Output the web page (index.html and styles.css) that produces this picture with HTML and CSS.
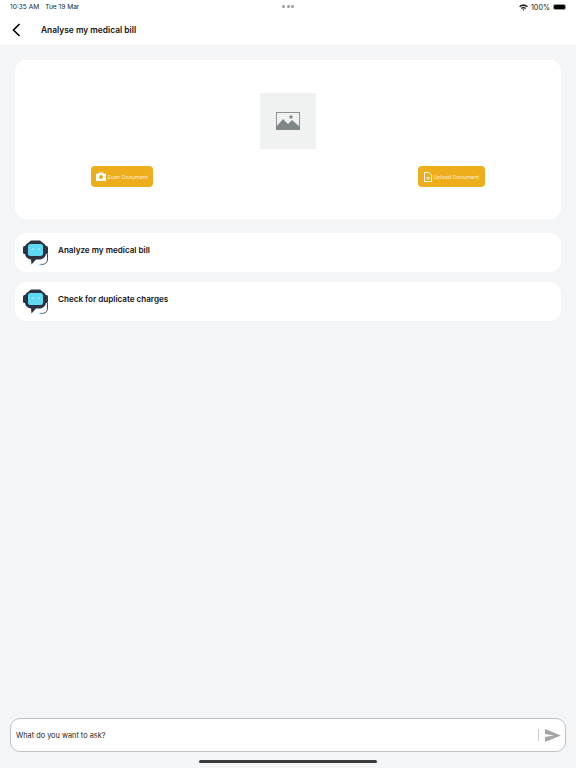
FILE: index.html
```html
<!DOCTYPE html>
<html>
<head>
  <meta charset='UTF-8'>
  <title>Analyse my medical bill</title>
  <link rel="stylesheet" href="styles.css">
</head>
<body>
  <div class='app'>
    <div class='topo'>
      <div class='status'>
        <span class='hora'>10:35 AM</span>
        <span class='data'>Tue 19 Mar</span>
        <span class='pontos'><i></i><i></i><i></i></span>
        <span class='direita'>
          <svg class='wifi' width='9' height='7' viewBox='0 0 10 8'>
            <path d='M0 2.6C2.8 0 7.2 0 10 2.6L8.9 3.8C6.7 1.8 3.3 1.8 1.1 3.8Z' fill='#111'/>
            <path d='M2 4.6C3.7 3 6.3 3 8 4.6L6.9 5.7C5.8 4.7 4.2 4.7 3.1 5.7Z' fill='#111'/>
            <path d='M3.9 6.4C4.5 5.9 5.5 5.9 6.1 6.4L5 7.6Z' fill='#111'/>
          </svg>
          <span>100%</span>
          <span class='bateria'><span class='carga'></span></span>
        </span>
      </div>
      <div class='cabecalho'>
        <svg class='voltar' width='9' height='14' viewBox='0 0 9 14'>
          <path d='M7.5 1L1.5 7L7.5 13' fill='none' stroke='#000' stroke-width='1.6'/>
        </svg>
        <h1>Analyse my medical bill</h1>
      </div>
    </div>

    <div class='conteudo'>
      <div class='cartao'>
        <div class='imagem'>
          <svg width='24' height='18' viewBox='0 0 24 18'>
            <rect x='0.5' y='0.5' width='23' height='17' fill='#f0f1f1' stroke='#8b9294'/>
            <circle cx='15' cy='5' r='1.7' fill='#7f8789'/>
            <path d='M0 17V15L7 7L12 12L16 8L24 15V18H0Z' fill='#7f8789'/>
          </svg>
        </div>
        <div class='botoes'>
          <button class='botao scan'>
            <svg width='10' height='9' viewBox='0 0 10 9'>
              <path d='M3 0.5H7L7.8 1.8H10V9H0V1.8H2.2Z' fill='#fff'/>
              <circle cx='5' cy='5' r='2' fill='#eeae1c'/>
            </svg>
            Scan Document
          </button>
          <button class='botao upload'>
            <svg width='8' height='10' viewBox='0 0 8 10'>
              <path d='M0.5 0.5H5L7.5 3V9.5H0.5Z' fill='none' stroke='#fff'/>
              <path d='M2 6H6M4 4.5V8' stroke='#fff' stroke-width='0.8'/>
            </svg>
            Upload Document
          </button>
        </div>
      </div>

      <div class='opcao'>
        <svg class='robo' width='26' height='26' viewBox='0 0 26 26'>
          <rect x='0' y='6' width='3.5' height='8' rx='1.5' fill='#2b3342'/>
          <rect x='21.5' y='6' width='3.5' height='8' rx='1.5' fill='#2b3342'/>
          <path d='M8 0.5H17L22 4.5C22.8 5.5 23 6.5 23 8V13C23 17 20 19.5 16 19.5H13L8.5 24.5L8 19.5C4.5 19 2 17 2 13V8C2 6.5 2.2 5.5 3 4.5Z' fill='#2b3342'/>
          <rect x='5' y='4' width='15' height='12' rx='2.5' fill='#5fd9f2'/>
          <path d='M8 9.5L11 8V10ZM14 9.5L17 8V10Z' fill='#a8ebfa'/>
          <path d='M24.5 14V19C24.5 23 22 24.5 18 24.5' fill='none' stroke='#2b3342' stroke-width='0.9'/>
          <circle cx='17.5' cy='24.5' r='1.1' fill='#5fd9f2'/>
        </svg>
        <span>Analyze my medical bill</span>
      </div>
      <div class='opcao'>
        <svg class='robo' width='26' height='26' viewBox='0 0 26 26'>
          <rect x='0' y='6' width='3.5' height='8' rx='1.5' fill='#2b3342'/>
          <rect x='21.5' y='6' width='3.5' height='8' rx='1.5' fill='#2b3342'/>
          <path d='M8 0.5H17L22 4.5C22.8 5.5 23 6.5 23 8V13C23 17 20 19.5 16 19.5H13L8.5 24.5L8 19.5C4.5 19 2 17 2 13V8C2 6.5 2.2 5.5 3 4.5Z' fill='#2b3342'/>
          <rect x='5' y='4' width='15' height='12' rx='2.5' fill='#5fd9f2'/>
          <path d='M8 9.5L11 8V10ZM14 9.5L17 8V10Z' fill='#a8ebfa'/>
          <path d='M24.5 14V19C24.5 23 22 24.5 18 24.5' fill='none' stroke='#2b3342' stroke-width='0.9'/>
          <circle cx='17.5' cy='24.5' r='1.1' fill='#5fd9f2'/>
        </svg>
        <span>Check for duplicate charges</span>
      </div>
    </div>

    <div class='rodape'>
      <div class='entrada'>
        <span class='pergunta'>What do you want to ask?</span>
        <span class='barrinha'></span>
        <svg width='16' height='13' viewBox='0 0 15 12'>
          <path d='M0 0L15 6L0 12V7.4L8 6L0 4.6Z' fill='#a3a5a6'/>
        </svg>
      </div>
      <div class='home'></div>
    </div>
  </div>
</body>
</html>
```

FILE: styles.css
```css
html, body { margin: 0; padding: 0; }
body { font-family: "Inter", "Liberation Sans", sans-serif; background: #f3f5f7; color: #111; }
.app { width: 576px; height: 768px; display: flex; flex-direction: column; overflow: hidden; }

.topo { height: 45px; background: #fff; flex: none; }
.status { height: 14px; padding: 0 10px; display: flex; align-items: center; font-size: 6.6px; color: #222; position: relative; }
.data { margin-left: 6px; }
.pontos { position: absolute; left: 282px; top: 5px; display: flex; gap: 1.5px; }
.pontos i { width: 3px; height: 3px; border-radius: 50%; background: #9a9a9a; }
.direita { margin-left: auto; display: flex; align-items: center; gap: 3px; font-size: 7.2px; }
.bateria { width: 13px; height: 6px; border-radius: 2px; border: 1px solid #999; display: block; box-sizing: border-box; }
.carga { display: block; height: 100%; background: #000; border-radius: 1px; }

.cabecalho { height: 31px; display: flex; align-items: center; padding-left: 12px; }
.voltar { flex: none; }
h1 { margin: 0 0 0 20px; font-size: 8.4px; font-weight: 600; color: #111; }

.conteudo { flex: 1; padding: 15px 15px 0; display: flex; flex-direction: column; }
.cartao { height: 159px; background: #fff; border-radius: 11px; padding-top: 33px; box-sizing: border-box; margin-bottom: 14px; }
.imagem { width: 56px; height: 56px; margin: 0 auto 17px; background: #f0f1f1; display: flex; align-items: center; justify-content: center; }
.botoes { display: flex; justify-content: space-between; padding: 0 76px; }
.botao { height: 21px; border: none; border-radius: 4px; background: #eeae1c; color: rgba(255, 255, 255, 0.8); font-family: inherit; font-size: 5.4px; padding: 0; display: flex; align-items: center; justify-content: center; gap: 1px; }
.scan { width: 62px; }
.upload { width: 67px; }

.opcao { height: 39px; background: #fff; border-radius: 11px; display: flex; align-items: center; padding: 0 0 5px 8px; box-sizing: border-box; margin-bottom: 10px; font-size: 8.1px; font-weight: 600; color: #111; }
.robo { flex: none; margin-right: 9px; margin-top: 5px; }

.rodape { flex: none; height: 50px; padding: 0 10px; position: relative; }
.entrada { height: 34px; box-sizing: border-box; background: #fff; border: 1px solid #bfc1c3; border-radius: 10px; display: flex; align-items: center; padding: 0 4px 0 5px; font-size: 7.35px; color: #222; }
.pergunta { flex: 1; }
.barrinha { width: 1px; height: 12px; background: #c9cbcc; margin-right: 6px; }
.home { width: 178px; height: 3px; background: #3a3a3a; border-radius: 2px; margin: 8px auto 0; }
```
